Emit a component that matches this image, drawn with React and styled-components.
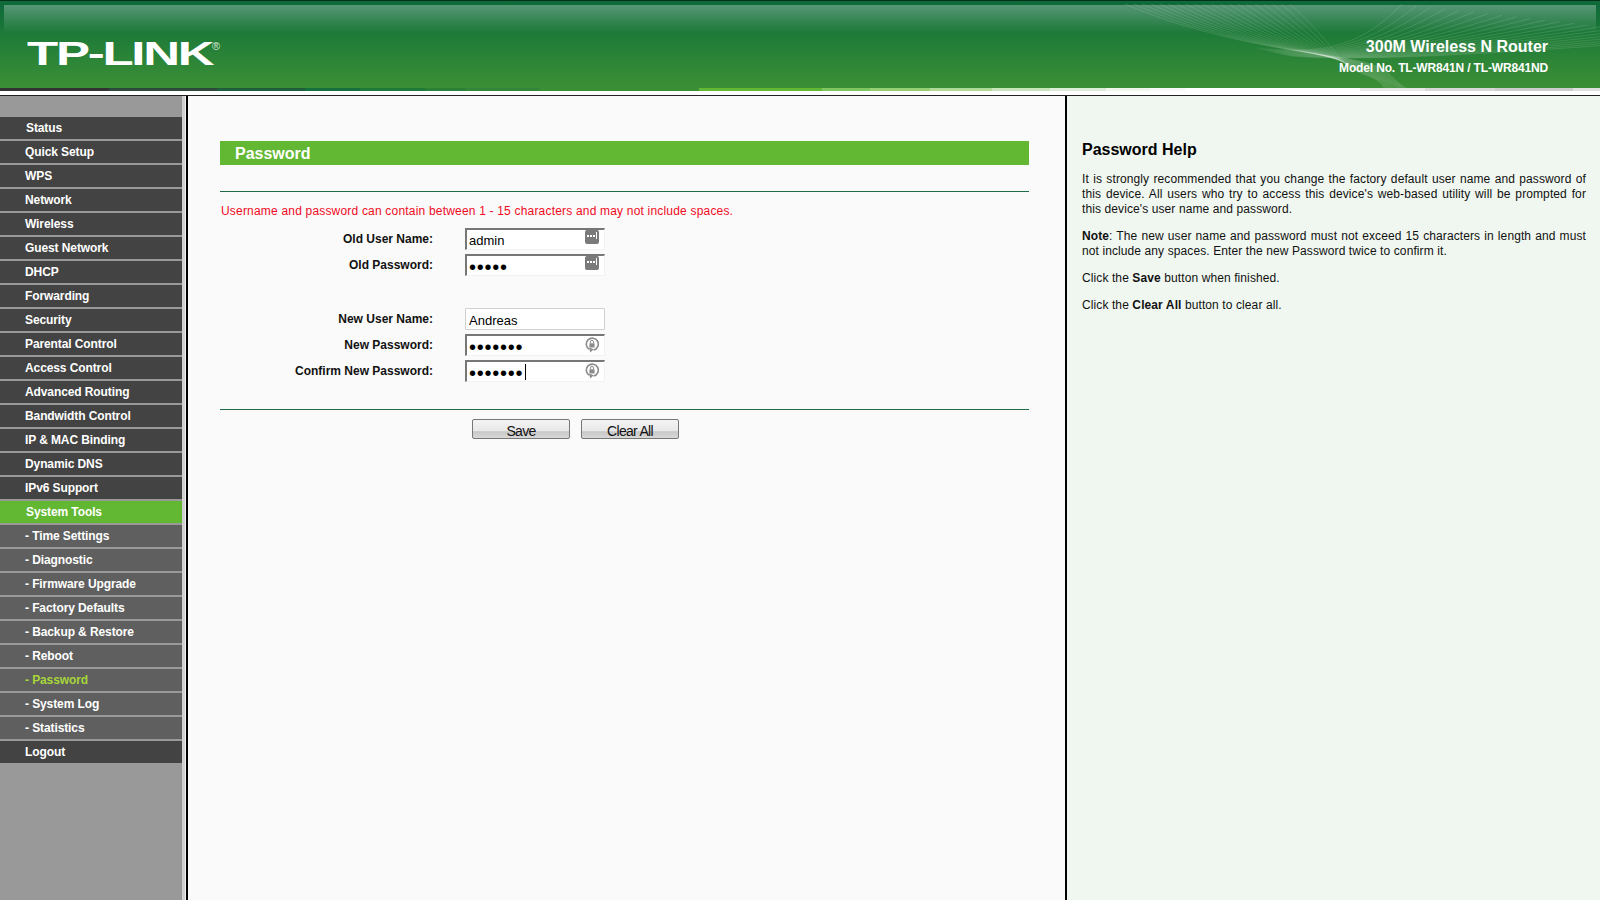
import React from 'react';
import styled, { createGlobalStyle } from 'styled-components';

const GlobalStyle = createGlobalStyle`
  html, body {
    margin: 0;
    height: 100%;
    overflow: hidden;
    background: #fafafa;
    font-family: "Liberation Sans", Arial, sans-serif;
  }
  * {
    box-sizing: border-box;
  }
`;

const menuItems = [
  { label: 'Status', offset: 1 },
  { label: 'Quick Setup' },
  { label: 'WPS' },
  { label: 'Network' },
  { label: 'Wireless' },
  { label: 'Guest Network' },
  { label: 'DHCP' },
  { label: 'Forwarding' },
  { label: 'Security' },
  { label: 'Parental Control' },
  { label: 'Access Control' },
  { label: 'Advanced Routing' },
  { label: 'Bandwidth Control' },
  { label: 'IP & MAC Binding' },
  { label: 'Dynamic DNS' },
  { label: 'IPv6 Support' },
  { label: 'System Tools', kind: 'active', offset: 1 },
  { label: '- Time Settings', kind: 'sub' },
  { label: '- Diagnostic', kind: 'sub' },
  { label: '- Firmware Upgrade', kind: 'sub' },
  { label: '- Factory Defaults', kind: 'sub' },
  { label: '- Backup & Restore', kind: 'sub' },
  { label: '- Reboot', kind: 'sub' },
  { label: '- Password', kind: 'sub', current: true },
  { label: '- System Log', kind: 'sub' },
  { label: '- Statistics', kind: 'sub' },
  { label: 'Logout' },
];

const itemColors = { active: '#63b833', sub: '#5f5f5f' };

const Waves = () => {
  const falling = Array.from({ length: 20 }, (_, i) => i / 19);
  const rising = Array.from({ length: 22 }, (_, i) => i / 21);
  return (
    <WaveSvg viewBox="0 0 1600 88" width="1600" height="88">
      <defs>
        <linearGradient id="riseFade" gradientUnits="userSpaceOnUse" x1="1250" y1="0" x2="1350" y2="0">
          <stop offset="0" stopColor="#fff" stopOpacity="0" />
          <stop offset="1" stopColor="#fff" stopOpacity="0.2" />
        </linearGradient>
      </defs>
      <g stroke="rgba(255,255,255,0.2)">
        {falling.map((t) => (
          <path
            key={`f${t}`}
            d={`M${1125 + 165 * t} 4 C${1190 + 135 * t} ${32 + 4 * t} ${1260 + 70 * t} ${46 + 2 * t} ${1330 + 15 * t} ${56 + 7 * t} S${1382 - 4 * t} 74 ${1406 - 22 * t} 88`}
          />
        ))}
      </g>
      <g stroke="url(#riseFade)">
        {rising.map((t) => (
          <path
            key={`r${t}`}
            d={`M${1245 + 45 * t} ${46 + 10 * t} C${1330 + 30 * t} ${58 + 4 * t} ${1365 + 130 * t} ${42 + 12 * t} ${1402 + 300 * t} ${4 + 34 * t}`}
          />
        ))}
      </g>
    </WaveSvg>
  );
};

const DotsIcon = () => (
  <FieldIcon as="svg" viewBox="0 0 14 14" width="14" height="14" $top={2}>
    <rect width="14" height="14" rx="2" fill="#7a7a7a" />
    <rect x="2" y="5" width="2" height="2" fill="#fff" />
    <rect x="5" y="5" width="2" height="2" fill="#fff" />
    <rect x="8" y="5" width="2" height="2" fill="#fff" />
    <rect x="11" y="2" width="1" height="7" fill="#fff" />
  </FieldIcon>
);

const LockIcon = () => (
  <FieldIcon as="svg" viewBox="0 0 14 16" width="14" height="16" $top={3}>
    <path d="M8.6 13A6 6 0 1 0 4.4 12.4" fill="none" stroke="#8c8c8c" strokeWidth="1.6" />
    <path d="M4.2 10.6 L8.8 12.2 L5.2 15.6 Z" fill="#8c8c8c" />
    <rect x="4.4" y="6.2" width="5.2" height="4.2" rx=".5" fill="#8c8c8c" />
    <path d="M5.4 6.2V5a1.6 1.6 0 0 1 3.2 0v1.2" fill="none" stroke="#8c8c8c" strokeWidth="1" />
  </FieldIcon>
);

const Field = ({ label, value, type = 'text', plain, icon, caret, gapTop }) => (
  <Row $gapTop={gapTop}>
    <Label>{label}</Label>
    <FieldBox $plain={plain}>
      <Input type={type} defaultValue={value} readOnly $secret={type === 'password'} $pad={plain ? 3 : 2} />
      {icon === 'dots' && <DotsIcon />}
      {icon === 'lock' && <LockIcon />}
      {caret && <Caret />}
    </FieldBox>
  </Row>
);

const App = () => (
  <Page>
    <GlobalStyle />
    <Header>
      <Waves />
      <Logo>
        <LogoText>TP-LINK</LogoText>
        <LogoMark>®</LogoMark>
      </Logo>
      <Product>
        <ProductName>300M Wireless N Router</ProductName>
        <ModelNo>Model No. TL-WR841N / TL-WR841ND</ModelNo>
      </Product>
    </Header>
    <Stripe />
    <Body>
      <Sidebar>
        {menuItems.map((item) => (
          <MenuItem
            key={item.label}
            $bg={itemColors[item.kind]}
            $current={item.current}
            $offset={item.offset}
          >
            {item.label}
          </MenuItem>
        ))}
      </Sidebar>
      <Divider />
      <Main>
        <TitleBar>Password</TitleBar>
        <Rule $top={26} />
        <Warning>Username and password can contain between 1 - 15 characters and may not include spaces.</Warning>
        <Form>
          <Field label="Old User Name:" value="admin" icon="dots" />
          <Field label="Old Password:" value="admin" type="password" icon="dots" />
          <Field label="New User Name:" value="Andreas" plain gapTop={28} />
          <Field label="New Password:" value="Andreas" type="password" icon="lock" />
          <Field label="Confirm New Password:" value="Andreas" type="password" icon="lock" caret />
        </Form>
        <Rule $top={27} />
        <Buttons>
          <Button>Save</Button>
          <Button>Clear All</Button>
        </Buttons>
      </Main>
      <Help>
        <HelpTitle>Password Help</HelpTitle>
        <HelpText>
          It is strongly recommended that you change the factory default user name and password of this device. All
          users who try to access this device's web-based utility will be prompted for this device's user name and
          password.
        </HelpText>
        <HelpText>
          <b>Note</b>: The new user name and password must not exceed 15 characters in length and must not include any
          spaces. Enter the new Password twice to confirm it.
        </HelpText>
        <HelpText>
          Click the <b>Save</b> button when finished.
        </HelpText>
        <HelpText>
          Click the <b>Clear All</b> button to clear all.
        </HelpText>
      </Help>
    </Body>
  </Page>
);

export default App;

const Page = styled.div`
  display: flex;
  flex-direction: column;
  width: 100%;
  height: 100vh;
  background: #fff;
`;

const Header = styled.header`
  position: relative;
  display: flex;
  justify-content: space-between;
  flex: 0 0 88px;
  padding: 0 52px 0 27px;
  overflow: hidden;
  border-top: 1px solid #04301a;
  background: linear-gradient(#0f6a3a 0, #0f6a3a 4px, #1d7a38 32px, #3a8e36 84px);
  &::before {
    content: '';
    position: absolute;
    top: 4px;
    left: 4px;
    right: 4px;
    height: 28px;
    background: linear-gradient(rgba(255, 255, 255, 0.3), rgba(255, 255, 255, 0));
  }
`;

const WaveSvg = styled.svg`
  position: absolute;
  top: -1px;
  left: 0;
  fill: none;
  stroke-width: 0.6;
`;

const Logo = styled.div`
  position: relative;
  display: flex;
  align-items: flex-start;
  padding-top: 35px;
`;

const LogoText = styled.span`
  display: inline-block;
  width: 186px;
  color: #fff;
  font-size: 34px;
  font-weight: 700;
  line-height: 34px;
  letter-spacing: -1.5px;
  white-space: nowrap;
  transform: scaleX(1.5);
  transform-origin: left center;
`;

const LogoMark = styled.span`
  margin: 5px 0 0 -1px;
  color: #dcebdc;
  font-size: 11px;
  line-height: 11px;
`;

const Product = styled.div`
  position: relative;
  display: flex;
  flex-direction: column;
  align-items: flex-end;
  padding-top: 37px;
  color: #fff;
  font-weight: 700;
`;

const ProductName = styled.div`
  font-size: 16px;
  line-height: 18px;
`;

const ModelNo = styled.div`
  margin-top: 5px;
  font-size: 12px;
  line-height: 14px;
  letter-spacing: -0.16px;
`;

const Stripe = styled.div`
  flex: 0 0 3px;
  margin-bottom: 4px;
  background: linear-gradient(
    90deg,
    #333 0 109px,
    #2f4a3a 109px 217px,
    #1f5e3c 217px 305px,
    #15703e 305px 360px,
    #1e7a3a 360px 425px,
    #2b8038 425px 465px,
    #338638 465px 540px,
    #3a8e36 540px 699px,
    #62b733 699px 822px,
    #7fc560 822px 870px,
    #97cf75 870px 930px,
    #afdb96 930px 992px,
    #c9e6bb 992px 1050px,
    #dcecd6 1050px 1106px,
    #f0f6ec 1106px 1150px,
    #f8f8f8 1150px 1185px,
    #fff 1185px 1360px,
    #e8e8e8 1360px 1425px,
    #d8d8d8 1425px 1495px,
    #ccc 1495px 1573px,
    #e0e0e0 1573px 1600px
  );
`;

const Body = styled.div`
  display: flex;
  flex: 1;
  min-height: 0;
  border-top: 1px solid #222;
`;

const Sidebar = styled.nav`
  display: flex;
  flex-direction: column;
  flex: 0 0 182px;
  gap: 2px;
  padding-top: 21px;
  background: #999;
`;

const MenuItem = styled.div`
  flex: 0 0 22px;
  padding-left: ${(p) => 25 + (p.$offset || 0)}px;
  background: ${(p) => p.$bg || '#434343'};
  color: ${(p) => (p.$current ? '#a6d63a' : '#fff')};
  font-size: 12px;
  font-weight: 700;
  line-height: 22px;
  letter-spacing: -0.1px;
  white-space: nowrap;
`;

const Divider = styled.div`
  flex: 0 0 6px;
  border-right: 2px solid #000;
  background: linear-gradient(90deg, #d0d0d0 0 3px, #f2f2f2 3px);
`;

const Main = styled.main`
  flex: 0 0 879px;
  padding: 45px 36px 0 32px;
  border-right: 2px solid #000;
  background: #fafafa;
`;

const TitleBar = styled.h1`
  margin: 0;
  height: 24px;
  padding: 1px 0 0 15px;
  background: #63b833;
  color: #fff;
  font-size: 16px;
  font-weight: 700;
  line-height: 24px;
`;

const Rule = styled.div`
  height: 1px;
  margin-top: ${(p) => p.$top}px;
  background: #1f6b45;
`;

const Warning = styled.p`
  margin: 12px 0 0 1px;
  color: #f00a1e;
  font-size: 12px;
  line-height: 15px;
  letter-spacing: 0.19px;
`;

const Form = styled.div`
  display: flex;
  flex-direction: column;
  gap: 4px;
  margin-top: 9px;
`;

const Row = styled.div`
  display: grid;
  grid-template-columns: 213px 140px;
  column-gap: 32px;
  align-items: center;
  height: 22px;
  margin-top: ${(p) => p.$gapTop || 0}px;
`;

const Label = styled.label`
  color: #111;
  font-size: 12px;
  font-weight: 700;
  text-align: right;
`;

const FieldBox = styled.div`
  position: relative;
  height: 22px;
  background: #fff;
  ${(p) =>
    p.$plain
      ? 'border: 1px solid #d0d0d0; border-radius: 1px;'
      : 'border-style: solid; border-width: 2px 1px 1px 2px; border-color: #777 #f2f2f2 #f2f2f2 #777;'}
`;

const Input = styled.input`
  display: block;
  width: 100%;
  height: 100%;
  padding: ${(p) => (p.$secret ? 3 : 2)}px 0 0 ${(p) => p.$pad}px;
  border: 0;
  outline: 0;
  background: transparent;
  color: #000;
  font-family: "Liberation Sans", Arial, sans-serif;
  font-size: ${(p) => (p.$secret ? 20 : 13)}px;
  letter-spacing: ${(p) => (p.$secret ? 0.76 : 0)}px;
`;

const FieldIcon = styled.span`
  position: absolute;
  top: ${(p) => p.$top - 2}px;
  right: 5px;
`;

const Caret = styled.span`
  position: absolute;
  top: 2px;
  left: 58px;
  width: 1px;
  height: 16px;
  background: #000;
`;

const Buttons = styled.div`
  display: flex;
  gap: 11px;
  margin: 9px 0 0 252px;
`;

const Button = styled.button`
  width: 98px;
  height: 20px;
  padding: 3px 0 0;
  border: 1px solid #777;
  border-radius: 2px;
  background: linear-gradient(#f4f4f4, #e8e8e8 60%, #c8c8c8 65%, #d8d8d8);
  color: #111;
  font-family: "Liberation Sans", Arial, sans-serif;
  font-size: 14px;
  line-height: 16px;
  letter-spacing: -0.7px;
`;

const Help = styled.aside`
  flex: 1;
  padding: 45px 14px 0 15px;
  background: #f0f7f0;
`;

const HelpTitle = styled.h2`
  margin: 0 0 13px;
  color: #000;
  font-size: 16px;
  font-weight: 700;
  line-height: 18px;
`;

const HelpText = styled.p`
  margin: 0 0 12px;
  color: #111;
  font-size: 12px;
  line-height: 15px;
  letter-spacing: 0.1px;
  text-align: justify;
`;
